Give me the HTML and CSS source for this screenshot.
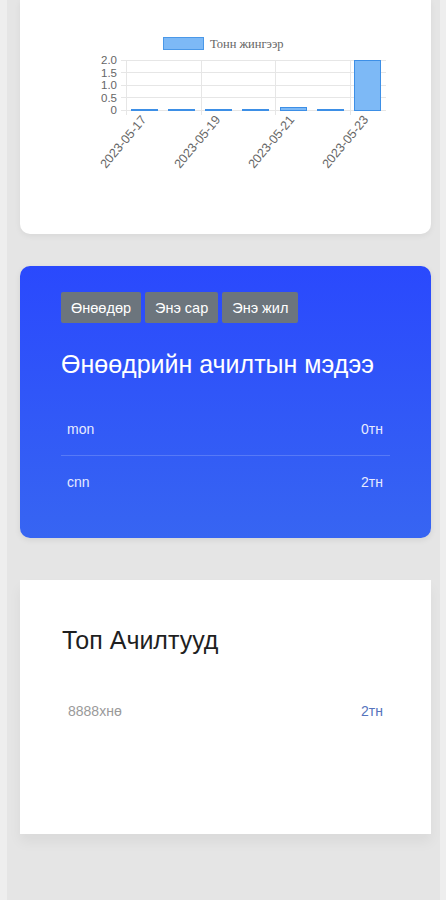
FILE: index.html
```html
<!DOCTYPE html>
<html lang="mn">
<head>
    <meta charset="UTF-8">
    <meta name="viewport" content="width=device-width, initial-scale=1.0">
    <title>Ачилтын хяналт</title>
    <link rel="stylesheet" href="styles.css">
</head>
<body>
    <div class="panel">
        <div class="card chart-card">
            <svg class="chart" width="411" height="234" viewBox="0 0 411 234">
                <!-- legend -->
                <rect x="143.5" y="37.5" width="40" height="12" fill="#7db9f6" stroke="#4a98e8"/>
                <text x="190" y="47.5" class="legend">Тонн жингээр</text>

                <!-- grid -->
                <g stroke="#e6e6e6" stroke-width="1">
                    <line x1="101" y1="60.5" x2="366" y2="60.5"/>
                    <line x1="101" y1="72.5" x2="366" y2="72.5"/>
                    <line x1="101" y1="85.5" x2="366" y2="85.5"/>
                    <line x1="101" y1="97.5" x2="366" y2="97.5"/>
                    <line x1="101" y1="110.5" x2="366" y2="110.5"/>
                    <line x1="106.5" y1="60" x2="106.5" y2="115"/>
                    <line x1="181.5" y1="60" x2="181.5" y2="115"/>
                    <line x1="255.5" y1="60" x2="255.5" y2="115"/>
                    <line x1="330.5" y1="60" x2="330.5" y2="115"/>
                </g>

                <!-- y ticks -->
                <g class="tick" text-anchor="end">
                    <text x="97" y="64">2.0</text>
                    <text x="97" y="76.5">1.5</text>
                    <text x="97" y="89">1.0</text>
                    <text x="97" y="101.5">0.5</text>
                    <text x="97" y="114">0</text>
                </g>

                <!-- bars -->
                <g fill="#7db9f6" stroke="#3d8fe6" stroke-width="1">
                    <rect x="111.5" y="109.5" width="26" height="1"/>
                    <rect x="148.5" y="109.5" width="26" height="1"/>
                    <rect x="185.5" y="109.5" width="26" height="1"/>
                    <rect x="222.5" y="109.5" width="26" height="1"/>
                    <rect x="260.5" y="107.5" width="26" height="3"/>
                    <rect x="297.5" y="109.5" width="26" height="1"/>
                    <rect x="334.5" y="60.5" width="26" height="50"/>
                </g>

                <!-- x ticks -->
                <g class="tick date" text-anchor="end">
                    <text transform="translate(127 120) rotate(-50)">2023-05-17</text>
                    <text transform="translate(201 120) rotate(-50)">2023-05-19</text>
                    <text transform="translate(275 120) rotate(-50)">2023-05-21</text>
                    <text transform="translate(349 120) rotate(-50)">2023-05-23</text>
                </g>
            </svg>
        </div>

        <div class="card report-card">
            <div class="tabs">
                <button class="tab">Өнөөдөр</button>
                <button class="tab">Энэ сар</button>
                <button class="tab">Энэ жил</button>
            </div>
            <h2 class="report-title">Өнөөдрийн ачилтын мэдээ</h2>
            <ul class="report-list">
                <li class="report-row"><span>mon</span><span>0тн</span></li>
                <li class="report-row"><span>cnn</span><span>2тн</span></li>
            </ul>
        </div>

        <div class="card top-card">
            <h2 class="top-title">Топ Ачилтууд</h2>
            <ul class="top-list">
                <li class="top-row"><span class="plate">8888хнө</span><span class="amount">2тн</span></li>
            </ul>
        </div>
    </div>
</body>
</html>
```

FILE: styles.css
```css
:root {
    --page-bg: #eeeeee;
    --panel-bg: #e5e5e5;
    --white: #ffffff;
    --tab-bg: #6c757d;
    --muted: #9a9a9a;
}

* {
    margin: 0;
    padding: 0;
    box-sizing: border-box;
}

body {
    font-family: 'Liberation Sans', Arial, sans-serif;
    background-color: var(--page-bg);
    color: #222;
}

.panel {
    margin-left: 7px;
    width: 433px;
    min-height: 900px;
    background-color: var(--panel-bg);
    padding: 0 9px 60px 13px;
}

.card {
    background-color: var(--white);
}

.chart-card {
    height: 234px;
    border-radius: 0 0 10px 10px;
    box-shadow: 0 2px 6px rgba(0, 0, 0, 0.06);
}

.chart {
    display: block;
}

.chart .legend {
    font-family: 'Liberation Serif', 'Times New Roman', serif;
    font-size: 12.5px;
    fill: #666;
}

.chart .tick text {
    font-family: 'Liberation Sans', Arial, sans-serif;
    font-size: 11.5px;
    fill: #666;
}

.chart .date text {
    font-size: 12.5px;
}

.report-card {
    margin-top: 32px;
    height: 272px;
    border-radius: 10px;
    padding: 26px 41px 0;
    color: var(--white);
    background: linear-gradient(180deg, #2a49fd 0%, #3765f2 100%);
    box-shadow: 0 2px 6px rgba(0, 0, 0, 0.08);
}

.tabs {
    display: flex;
    gap: 4px;
}

.tab {
    background-color: var(--tab-bg);
    color: var(--white);
    border: none;
    border-radius: 2px;
    height: 31px;
    padding: 0 10px;
    font-family: inherit;
    font-size: 14.5px;
}

.report-title {
    margin-top: 27px;
    font-size: 25px;
    line-height: 28px;
    font-weight: 400;
}

.report-list {
    list-style: none;
    margin-top: 24px;
}

.report-row {
    display: flex;
    justify-content: space-between;
    align-items: center;
    height: 53px;
    padding: 0 7px 0 6px;
    font-size: 14px;
    color: #e6ebff;
}

.report-row + .report-row {
    border-top: 1px solid rgba(255, 255, 255, 0.18);
}

.top-card {
    margin-top: 42px;
    height: 254px;
    padding: 46px 41px 0 42px;
    box-shadow: 0 8px 12px rgba(0, 0, 0, 0.05);
}

.top-title {
    font-size: 25px;
    line-height: 28px;
    font-weight: 400;
    color: #1f1f1f;
}

.top-list {
    list-style: none;
    margin-top: 31px;
}

.top-row {
    display: flex;
    justify-content: space-between;
    align-items: center;
    height: 52px;
    padding: 0 7px 0 6px;
    font-size: 14px;
}

.plate {
    color: var(--muted);
}

.amount {
    color: #5674bd;
}
```
